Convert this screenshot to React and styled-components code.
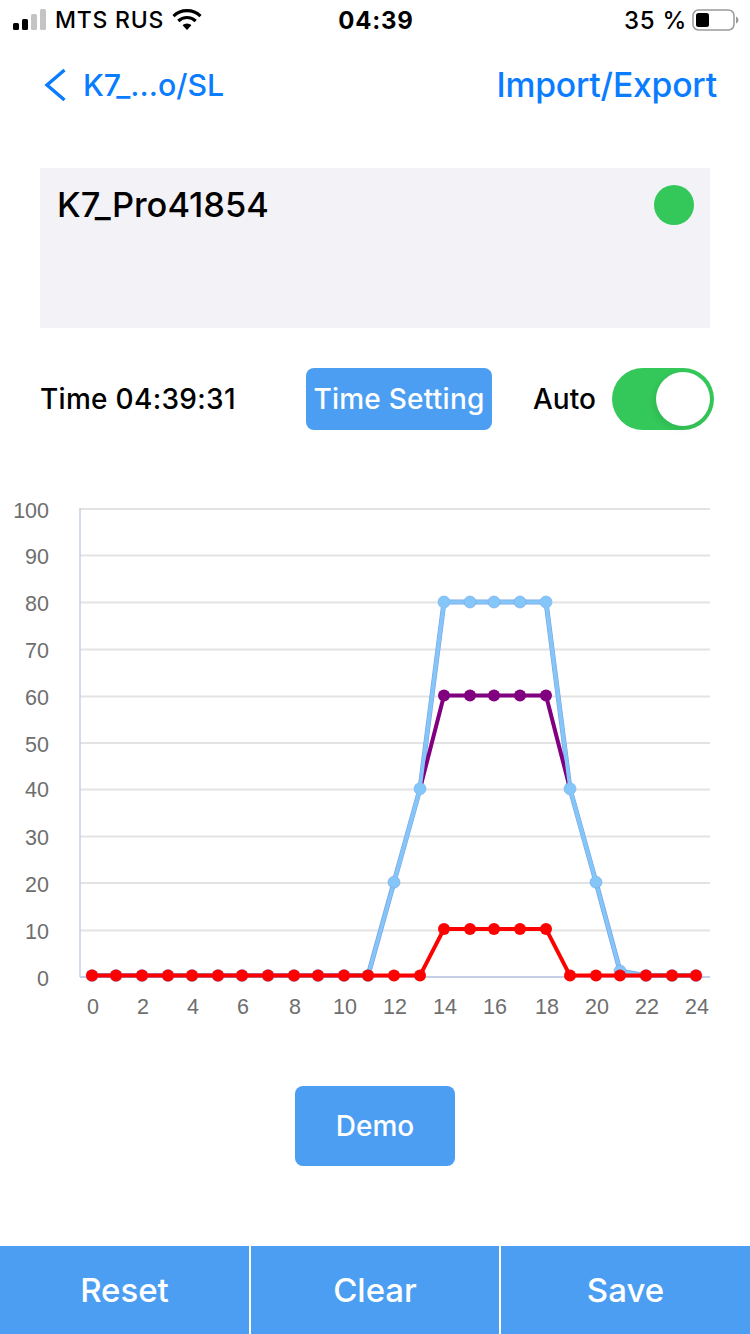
import React from "react";
import styled, { createGlobalStyle } from "styled-components";

const Global = createGlobalStyle`
  html, body { margin: 0; padding: 0; background: #fff; }
  body { font-family: Inter, "Liberation Sans", sans-serif; }
  * { box-sizing: border-box; }
`;
const Page = styled.div`
  width: 750px; height: 1334px; display: flex; flex-direction: column; overflow: hidden; background: #fff;
`;
const StatusBar = styled.div`
  height: 40px; padding: 0 11px 0 13px; display: grid; grid-template-columns: 1fr auto 1fr; align-items: center;
  color: #000; font-size: 23px; letter-spacing: 0.75px; font-weight: 500;
`;
const StatusLeft = styled.div`display: flex; align-items: center; gap: 8px;`;
const StatusRight = styled.div`display: flex; align-items: center; justify-content: flex-end; gap: 5px; font-size: 24px;`;
const Clock = styled.div`font-weight: 700; font-size: 24px; letter-spacing: 0.8px;`;
const NavBar = styled.div`
  height: 88px; padding: 1px 33px 0 43px; display: flex; align-items: center; justify-content: space-between; color: #0a7cff;
`;
const BackLink = styled.div`display: flex; align-items: center; gap: 16px; font-size: 30.3px; font-weight: 500;`;
const NavAction = styled.div`font-size: 33.7px; font-weight: 500; letter-spacing: -0.2px;`;
const DeviceCard = styled.div`
  margin: 40px 40px 0; height: 160px; background: #f2f2f7; padding: 16px 16px 0 17px;
  display: flex; justify-content: space-between; align-items: flex-start;
`;
const DeviceName = styled.div`font-size: 34.4px; font-weight: 500; line-height: 42px; color: #000;`;
const Dot = styled.div`width: 40px; height: 40px; border-radius: 50%; background: #34c759; margin-top: 1px;`;
const Controls = styled.div`
  margin-top: 40px; height: 62px; padding: 0 36px 0 40px; display: flex; align-items: center; color: #000; font-size: 28px; font-weight: 500;
`;
const TimeLabel = styled.div`width: 266px; letter-spacing: 0.3px;`;
const BlueButton = styled.button`
  border: 0; padding: 0; background: #4c9ef3; color: #fff; border-radius: 8px; font-family: inherit; font-weight: 500;
  width: ${p => p.$w}px; height: ${p => p.$h}px; font-size: 28px; letter-spacing: ${p => p.$spacing || 0}px;
`;
const AutoLabel = styled.div`margin-left: 41px; width: 79px;`;
const Switch = styled.div`
  width: 102px; height: 62px; border-radius: 31px; background: #34c759;
  display: flex; justify-content: flex-end; align-items: center; padding-right: 4px;
`;
const Thumb = styled.div`width: 54px; height: 54px; border-radius: 50%; background: #fff; box-shadow: -2px 3px 6px rgba(0,0,0,.08);`;
const ChartWrap = styled.div`margin-top: 40px; height: 560px;`;
const ChartSvg = styled.svg`display: block;`;
const DemoRow = styled.div`margin-top: 56px; display: flex; justify-content: center;`;
const Footer = styled.div`
  margin-top: auto; height: 88px; display: grid; grid-template-columns: 249px 248px 249px; column-gap: 2px;
`;
const FooterButton = styled.button`
  border: 0; padding: 0; background: #4c9ef3; color: #fff; font-family: inherit; font-size: 33px; font-weight: 500;
`;

const xs = [92,116,142,168,192,218,242,268,294,318,344,368,394,420,444,470,494,520,546,570,596,620,646,672,696];
const ticks = [509,555.5,602.5,649.5,696.5,743,789.5,836.5,883,930.5,977];
const labelYs = [518,564,611,658,705,752,797,845,892,939,986];
const yOf = v => 975.6 - v * 4.67;
const blue = [0,0,0,0,0,0,0,0,0,0,0,0,20,40,80,80,80,80,80,40,20,1,0,0,0];
const red = [0,0,0,0,0,0,0,0,0,0,0,0,0,0,10,10,10,10,10,0,0,0,0,0,0];
const pts = (d, from = 0, to = d.length - 1) =>
  d.map((v, i) => `${xs[i]},${yOf(v)}`).slice(from, to + 1).join(" ");
const purple = blue.map((v, i) => (i >= 14 && i <= 18 ? 60 : v));

const Series = ({ data, color, edge }) => (
  <g>
    {edge && <polyline points={pts(data)} fill="none" stroke={edge} strokeWidth="5" />}
    <polyline points={pts(data)} fill="none" stroke={color} strokeWidth={edge ? 3.4 : 4} />
    {data.map((v, i) => (
      <circle key={i} cx={xs[i]} cy={yOf(v)} r="6" fill={color} stroke={edge || "none"} strokeWidth={edge ? 0.6 : 0} />
    ))}
  </g>
);

const Chart = () => (
  <ChartSvg width="750" height="560" viewBox="0 470 750 560">
    {ticks.map((y, i) => (
      <g key={y}>
        <line x1="80" x2="710" y1={y} y2={y} stroke={i === 10 ? "#c5d0e6" : "#e3e3e3"} strokeWidth="2" />
        <text x="49" y={labelYs[i]} textAnchor="end" fontFamily="'Liberation Sans', sans-serif" fontSize="21.5" fill="#6e6e6e">
          {100 - i * 10}
        </text>
      </g>
    ))}
    <line x1="80" x2="80" y1="508" y2="977" stroke="#c5d0e6" strokeWidth="1.5" />
    {[0,2,4,6,8,10,12,14,16,18,20,22,24].map(h => (
      <text key={h} x={xs[h] + 1} y="1013.500" textAnchor="middle" fontFamily="'Liberation Sans', sans-serif" fontSize="21.5" fill="#6e6e6e">
        {h}
      </text>
    ))}
    <Series data={blue} color="#85c6f8" edge="#7aa5e8" />
    <polyline points={pts(purple, 13, 19)} fill="none" stroke="#800080" strokeWidth="4" />
    {[14,15,16,17,18].map(i => <circle key={i} cx={xs[i]} cy={yOf(60)} r="6" fill="#800080" />)}
    <polyline points={pts(blue, 12, 14)} fill="none" stroke="#85c6f8" strokeWidth="3.4" />
    <polyline points={pts(blue, 18, 20)} fill="none" stroke="#85c6f8" strokeWidth="3.4" />
    {[13,19,14,18].map(i => <circle key={i} cx={xs[i]} cy={yOf(blue[i])} r="6" fill="#85c6f8" />)}
    <Series data={red} color="#ff0000" />
  </ChartSvg>
);

const Signal = () => (
  <svg width="34" height="22" viewBox="0 0 34 22">
    <rect x="0" y="14" width="6" height="7" rx="1.5" fill="#000" />
    <rect x="9" y="10" width="6" height="11" rx="1.5" fill="#000" />
    <rect x="18" y="5" width="6" height="16" rx="1.5" fill="#c4c4c4" />
    <rect x="27" y="0" width="6" height="21" rx="1.5" fill="#c4c4c4" />
  </svg>
);
const Wifi = () => (
  <svg width="30" height="22" viewBox="0 0 30 22">
    <path d="M1.500 7.200C5 3.800 9.800 1.700 15 1.700s10 2.100 13.500 5.500" fill="none" stroke="#000" strokeWidth="3.2" />
    <path d="M6.300 12C8.600 9.800 11.600 8.500 15 8.500s6.400 1.300 8.700 3.500" fill="none" stroke="#000" strokeWidth="3.2" />
    <path d="M10.600 16.300c1.100-1.100 2.700-1.800 4.400-1.800s3.300.7 4.400 1.800L15 21z" fill="#000" />
  </svg>
);
const Battery = () => (
  <svg width="47" height="24" viewBox="0 0 47 24">
    <rect x="1" y="2" width="41" height="20" rx="5.500" fill="none" stroke="#9a9a9a" strokeWidth="1.500" />
    <rect x="4" y="5" width="13" height="14" rx="2.500" fill="#000" />
    <path d="M44 8.500c1.500.5 2.500 2 2.500 3.500s-1 3-2.500 3.500z" fill="#9a9a9a" />
  </svg>
);

export default function App() {
  return (
    <Page>
      <Global />
      <StatusBar>
        <StatusLeft><Signal /><span>MTS RUS</span><Wifi /></StatusLeft>
        <Clock>04:39</Clock>
        <StatusRight><span>35 %</span><Battery /></StatusRight>
      </StatusBar>
      <NavBar>
        <BackLink>
          <svg width="24" height="34" viewBox="0 0 24 34">
            <path d="M21.500 2L4 17l17.500 15" fill="none" stroke="#0a7cff" strokeWidth="3.400" />
          </svg>
          <span>K7_...o/SL</span>
        </BackLink>
        <NavAction>Import/Export</NavAction>
      </NavBar>
      <DeviceCard>
        <DeviceName>K7_Pro41854</DeviceName>
        <Dot />
      </DeviceCard>
      <Controls>
        <TimeLabel>Time 04:39:31</TimeLabel>
        <BlueButton $w={186} $h={62} $spacing={0.25}>Time Setting</BlueButton>
        <AutoLabel>Auto</AutoLabel>
        <Switch><Thumb /></Switch>
      </Controls>
      <ChartWrap><Chart /></ChartWrap>
      <DemoRow><BlueButton $w={160} $h={80}>Demo</BlueButton></DemoRow>
      <Footer>
        <FooterButton>Reset</FooterButton>
        <FooterButton>Clear</FooterButton>
        <FooterButton>Save</FooterButton>
      </Footer>
    </Page>
  );
}
